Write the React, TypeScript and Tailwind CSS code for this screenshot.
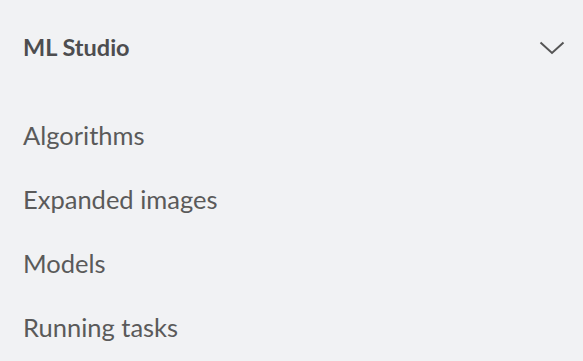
const items = ["Algorithms", "Expanded images", "Models", "Running tasks"];

export default function App() {
  return (
    <div
      className="w-[583px] h-[361px] bg-[#f1f2f4] overflow-hidden"
      style={{ fontFamily: "Lato, 'Noto Sans', sans-serif" }}
    >
      <div className="flex items-center justify-between h-[96px] pl-[23px] pr-[18px]">
        <span className="text-[23.5px] font-bold text-[#4d4d4f]">ML Studio</span>
        <svg width="26" height="14" viewBox="0 0 26 14" fill="none">
          <path d="M1.5 1.5 L13 12 L24.5 1.5" stroke="#555" strokeWidth="2" />
        </svg>
      </div>
      <nav className="mt-[7px] flex flex-col">
        {items.map((item) => (
          <a key={item} className="h-[64px] flex items-center pl-[23px] text-[25.5px] text-[#5a5a5a]">
            {item}
          </a>
        ))}
      </nav>
    </div>
  );
}
